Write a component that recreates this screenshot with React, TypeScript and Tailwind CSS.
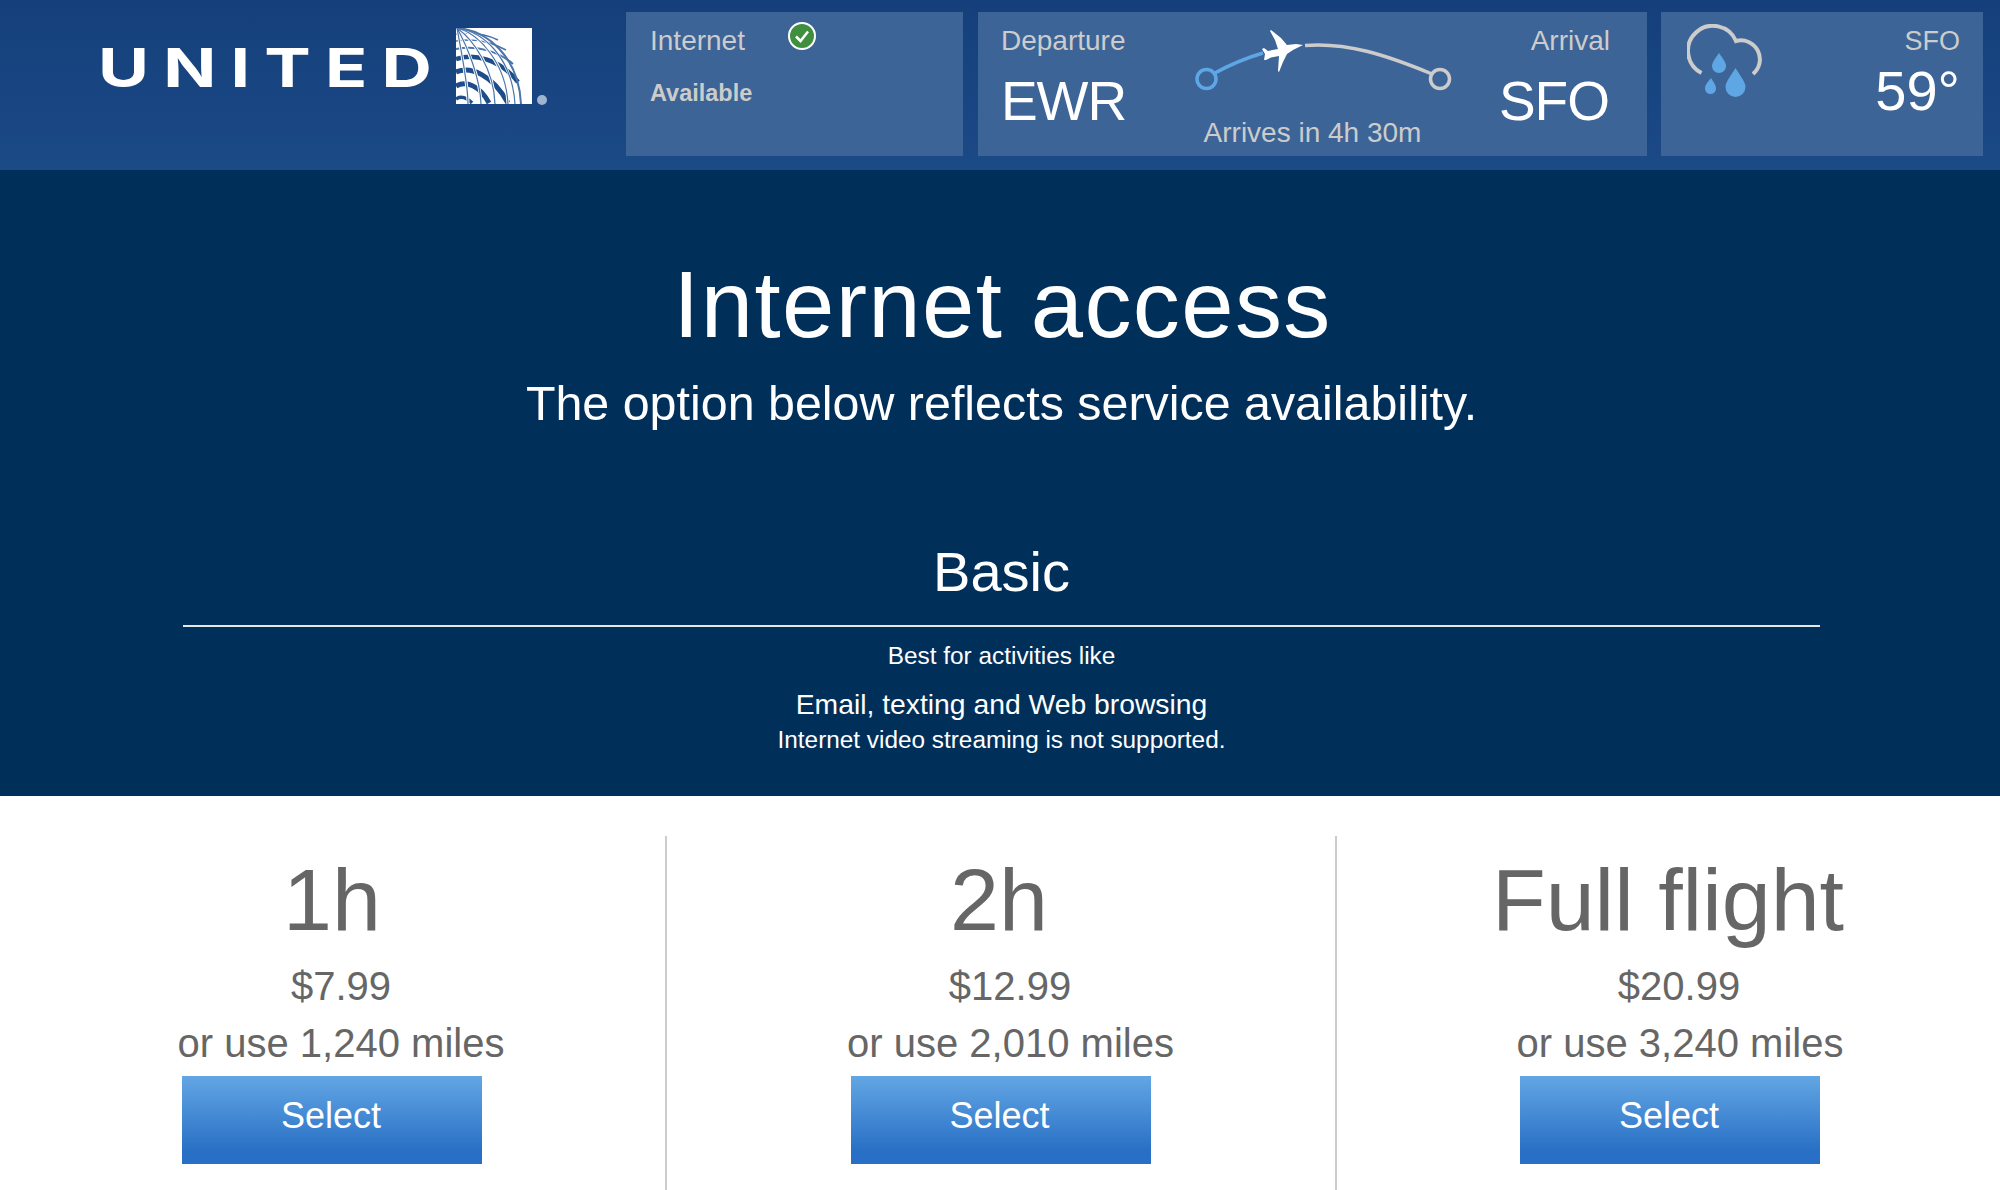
const plans = [
  { name: '1h', price: '$7.99', miles: 'or use 1,240 miles', nameShift: 'pr-0', priceShift: 'pl-[18px]', milesShift: 'pl-[18px]', buttonShift: 'ml-0' },
  { name: '2h', price: '$12.99', miles: 'or use 2,010 miles', nameShift: 'pr-0', priceShift: 'pl-[22px]', milesShift: 'pl-[23px]', buttonShift: 'ml-[3px]' },
  { name: 'Full flight', price: '$20.99', miles: 'or use 3,240 miles', nameShift: 'pr-[2px]', priceShift: 'pl-[20px]', milesShift: 'pl-[22px]', buttonShift: 'ml-[2px]' },
]

function UnitedGlobe() {
  return (
    <svg width="92" height="80" viewBox="0 0 92 80" className="shrink-0">
      <rect x="0" y="0" width="76" height="76" fill="#fff" />
      {/* parallels */}
      <g fill="none" stroke="#4a75aa" strokeWidth="1.500">
        <path d="M0 6C16 4 30 6 42 12" />
        <path d="M0 13C18 10 36 14 50 22" />
        <path d="M0 21C20 17 42 23 57 36" strokeWidth="2" />
      </g>
      <g fill="none" stroke="#1d4c88">
        <path d="M0 31C18 25 44 31 62 54" strokeWidth="4.500" />
        <path d="M0 44C14 38 36 46 52 75" strokeWidth="5" />
        <path d="M0 58C10 52 24 58 33 75" strokeWidth="5" />
        <path d="M0 71C6 67 12 71 16 75" strokeWidth="3.500" />
      </g>
      {/* meridians cut the parallels into cells */}
      <g fill="none" stroke="#fff" strokeWidth="3">
        <path d="M1 0C12 20 24 50 25 76" />
        <path d="M1 0C6 28 12 56 12 76" />
        <path d="M1 0C18 12 38 42 39 76" />
        <path d="M1 0C24 6 50 36 52 76" />
        <path d="M1 0C28 4 56 30 59 76" strokeWidth="2.500" />
      </g>
      <g fill="none" stroke="#4a75aa" strokeWidth="1.200">
        <path d="M1 0C24 6 50 36 52 76" />
        <path d="M1 0C18 12 38 42 39 76" />
        <path d="M1 0C12 20 24 50 25 76" />
        <path d="M1 0C6 28 12 56 12 76" />
        <path d="M1 0C28 4 56 30 59 76" />
        <path d="M1 0C30 2 63 28 65 76" strokeWidth="2" />
      </g>
      <circle cx="86" cy="72" r="5" fill="#9fb4cf" />
    </svg>
  )
}

function FlightArc() {
  return (
    <svg width="280" height="90" viewBox="0 0 280 90" className="shrink-0">
      <path d="M32 54C50 44 65 38 82 33" fill="none" stroke="#5ea7e4" strokeWidth="3.500" />
      <circle cx="25.500" cy="59" r="9.500" fill="none" stroke="#5ea7e4" strokeWidth="3.500" />
      <path d="M124 25.500C165 22 205 35 251 54" fill="none" stroke="#cccccc" strokeWidth="3.500" />
      <circle cx="259" cy="59" r="9.500" fill="none" stroke="#cccccc" strokeWidth="3.500" />
      <path
        d="M122 25L112 30L106 34L102 42L98 52L97 51L98 36L90 37.500L85 40L83 40L84 34L81 29L83 28L87 31L97 29L94 20L89 11L90 10L100 18L106 25L115 24Z"
        fill="#fff"
      />
    </svg>
  )
}

function RainCloud() {
  return (
    <svg width="78" height="76" viewBox="0 0 78 76" className="shrink-0">
      <path d="M14.500 49A25 25 0 1 1 49 17A19 19 0 0 1 66 50" fill="none" stroke="#cccccc" strokeWidth="4" />
      <path d="M32 29C37 36 39 39 39 42A7 7 0 0 1 25 42C25 39 27 36 32 29Z" fill="#5ea7e4" />
      <path d="M24 54C27 59 29 61 29 64.500A5.500 5.500 0 0 1 18 64.500C18 61 20 59 24 54Z" fill="#5ea7e4" />
      <path d="M48.500 44C54 53 58.500 58 58.500 63A10 10 0 0 1 38.500 63C38.500 58 43 53 48.500 44Z" fill="#5ea7e4" />
    </svg>
  )
}

export default function App() {
  return (
    <div className="h-[1190px] overflow-hidden bg-white font-['Liberation_Sans',Arial,sans-serif]">
      {/* Top bar */}
      <header className="flex h-[170px] bg-gradient-to-b from-[#143f7a] to-[#1c4a87] pt-3 pr-4">
        <div className="flex w-[626px] shrink-0 items-start pt-4 pl-[98px]">
          <span className="mt-[9px] w-[358px] origin-left scale-x-[1.29] font-['Inter',sans-serif] text-[54px] leading-[62px] font-bold tracking-[11px] text-white">
            UNITED
          </span>
          <UnitedGlobe />
        </div>

        <div className="h-36 w-[337px] shrink-0 bg-[#3d6496] px-6 pt-[13px]">
          <div className="flex items-center">
            <span className="text-[28px] leading-8 text-[#cccccc]">Internet</span>
            <svg width="30" height="30" viewBox="0 0 30 30" className="mt-[-10px] ml-[42px]">
              <circle cx="15" cy="15" r="13" fill="#3f8f3f" stroke="#fff" strokeWidth="2" />
              <path d="M9 15.500L13.500 20L21 10.500" fill="none" stroke="#fff" strokeWidth="2.500" />
            </svg>
          </div>
          <p className="mt-[22px] text-[23.500px] leading-7 font-bold text-[#cccccc]">Available</p>
        </div>

        <div className="ml-[15px] flex h-36 w-[669px] shrink-0 bg-[#3d6496] pt-[13px] pr-[38px] pl-[23px]">
          <div>
            <p className="text-[28px] leading-8 text-[#cccccc]">Departure</p>
            <p className="mt-[14px] text-[55px] leading-[60px] tracking-[-1.100px] text-white">EWR</p>
          </div>
          <div className="mt-[-5px] ml-[55px] flex flex-col items-center">
            <FlightArc />
            <p className="mt-[7px] mr-[17px] text-[28px] leading-8 text-[#cccccc]">Arrives in 4h 30m</p>
          </div>
          <div className="ml-auto text-right">
            <p className="mr-[-1px] text-[28px] leading-8 text-[#cccccc]">Arrival</p>
            <p className="mt-[14px] text-[55px] leading-[60px] tracking-[-1px] text-white">SFO</p>
          </div>
        </div>

        <div className="ml-[14px] flex h-36 w-[322px] shrink-0 justify-between bg-[#3d6496] pt-3 pr-[23px] pl-[26px]">
          <RainCloud />
          <div className="pt-px text-right">
            <p className="text-[27px] leading-8 text-[#cccccc]">SFO</p>
            <p className="mt-1 text-[56px] leading-[60px] text-white">59°</p>
          </div>
        </div>
      </header>

      {/* Plan intro */}
      <section className="flex h-[626px] flex-col items-center bg-[#002f5a] pl-[3px] text-white">
        <h1 className="mt-[85px] ml-[2px] text-[94px] leading-[100px] tracking-[1.400px]">Internet access</h1>
        <p className="mt-[20px] text-[48.400px] leading-[56px]">The option below reflects service availability.</p>
        <h2 className="mt-[109px] text-[56px] leading-[64px]">Basic</h2>
        <div className="mt-[21px] h-[2px] w-[1637px] bg-[#e6e6e6]" />
        <p className="mt-[14px] text-[24.400px] leading-[30px]">Best for activities like</p>
        <p className="mt-[17px] text-[28.300px] leading-[32px]">Email, texting and Web browsing</p>
        <p className="mt-[5px] text-[24.350px] leading-[30px]">Internet video streaming is not supported.</p>
      </section>

      {/* Duration options */}
      <section className="grid h-[394px] grid-cols-[667px_670px_663px] pt-10 text-[#666666]">
        {plans.map((plan, i) => (
          <div key={plan.name} className={i < 2 ? 'border-r-2 border-[#cccccc]' : ''}>
            <div className="flex w-[664px] flex-col items-center">
              <p className={`mt-[14px] text-[88px] leading-[100px] ${plan.nameShift}`}>{plan.name}</p>
              <p className={`mt-[14px] text-[40px] leading-[44px] ${plan.priceShift}`}>{plan.price}</p>
              <p className={`mt-[13px] text-[40px] leading-[44px] ${plan.milesShift}`}>{plan.miles}</p>
              <button className={`mt-[11px] flex h-[88px] w-[300px] justify-center bg-gradient-to-b from-[#63a6e4] to-[#2870c5] to-85% pt-[18px] pr-[2px] text-[36px] leading-[44px] text-white ${plan.buttonShift}`}>
                Select
              </button>
            </div>
          </div>
        ))}
      </section>
    </div>
  )
}
